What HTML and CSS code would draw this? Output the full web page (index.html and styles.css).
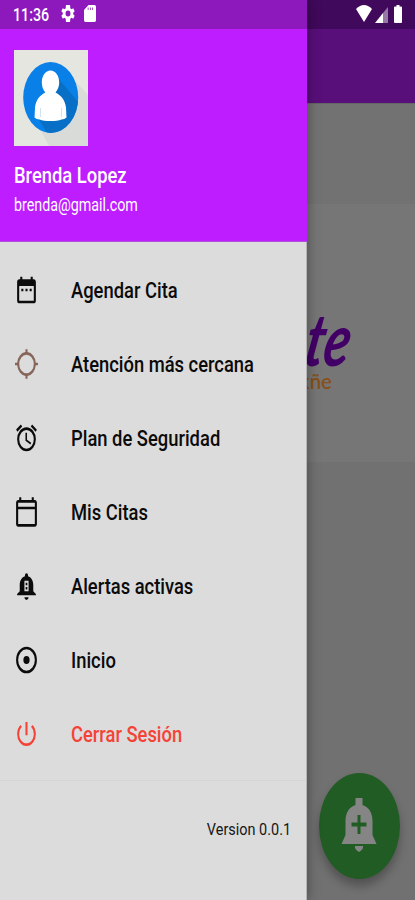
FILE: index.html
```html
<!DOCTYPE html>
<html lang="es">
<head>
<meta charset="utf-8">
<title>Menú</title>
<link rel="stylesheet" href="styles.css">
</head>
<body>
<div class="phone">
  <aside class="drawer">
    <header class="profile">
      <div class="status"><span class="clock"><span class="t">11:36</span></span>
        <svg class="gear" viewBox="2 2 20 20" preserveAspectRatio="none"><path fill-rule="evenodd" d="M19.4 13a7.500 7.500 0 0 0 0-2l2.100-1.600-2-3.500-2.500 1a7.300 7.300 0 0 0-1.700-1L14.900 2H9.100l-.4 3.900a7.300 7.300 0 0 0-1.700 1l-2.500-1-2 3.500L4.600 11a7.500 7.500 0 0 0 0 2l-2.100 1.600 2 3.500 2.500-1a7.300 7.300 0 0 0 1.700 1l.4 3.900h5.800l.4-3.900a7.300 7.300 0 0 0 1.700-1l2.500 1 2-3.500zM12 15.500a3.500 3.500 0 1 1 0-7 3.500 3.500 0 0 1 0 7z"/></svg>
        <svg class="sd" viewBox="4 2 16 20" preserveAspectRatio="none"><path fill-rule="evenodd" d="M18 2h-8L4 8v12q0 2 2 2h12q2 0 2-2V4q0-2-2-2zM9 5h1v3H9zm3 0h1v3h-1zm3 0h1v3h-1z"/></svg>
      </div>
      <svg class="avatar" viewBox="0 0 74 96">
        <defs><clipPath id="disc"><ellipse cx="36.700" cy="47.500" rx="27.500" ry="35.500"/></clipPath></defs>
        <path fill="#e6e6e1" d="M0 0h74v96H0z"/>
        <path fill="#d9dbd9" d="M62 32l12 13v51H35L26 79z"/>
        <ellipse cx="36.700" cy="47.500" rx="27.500" ry="35.500" fill="#0880e8"/>
        <g clip-path="url(#disc)"><path fill="#086fc6" d="M44 28l27 32-12 28H36L24 68z"/>
        <path fill="#fff" d="M36.500 20.500c-5 0-8.700 5-8.700 12 0 4.500 1.500 7.500 3.500 10-6 3-9.500 8-10.300 15l-.5 10q2 2 5 2 4 1.500 11 1.500t11-1.500q3 0 5-2l-.5-10c-.8-7-4.500-12-10.500-15 2-2.500 3.700-5.500 3.700-10 0-7-3.700-12-8.700-12z"/>
        <path stroke="#b9d5ec" stroke-width=".7" d="M26.500 58v9M47.500 58v9"/></g>
      </svg>
      <div class="name"><span class="t">Brenda Lopez</span></div>
      <div class="mail"><span class="t">brenda@gmail.com</span></div>
    </header>
    <nav class="menu">
      <div class="item"><svg class="icon" viewBox="0 0 24 24" preserveAspectRatio="none"><path d="M9 11H7v2h2v-2zm4 0h-2v2h2v-2zm4 0h-2v2h2v-2zm2-7h-1V2h-2v2H8V2H6v2H5c-1.110 0-2 .9-2 2v14c0 1.100.89 2 2 2h14c1.100 0 2-.9 2-2V6c0-1.100-.9-2-2-2zm0 16H5V9h14v11z"/></svg><span class="label">Agendar Cita</span></div>
      <div class="item"><svg class="icon brown" viewBox="0 0 24 24" preserveAspectRatio="none"><path d="M20.940 11A8.994 8.994 0 0 0 13 3.060V1h-2v2.060A8.994 8.994 0 0 0 3.060 11H1v2h2.060A8.994 8.994 0 0 0 11 20.940V23h2v-2.060A8.994 8.994 0 0 0 20.940 13H23v-2h-2.060zM12 19a7 7 0 1 1 0-14 7 7 0 0 1 0 14z"/></svg><span class="label">Atención más cercana</span></div>
      <div class="item"><svg class="icon" viewBox="0 0 24 24" preserveAspectRatio="none"><path d="M22 5.720l-4.600-3.860-1.290 1.530 4.600 3.860L22 5.720zM7.880 3.390L6.600 1.860 2 5.710l1.290 1.530 4.590-3.850zM12.500 8H11v6l4.750 2.850.75-1.230-4-2.370V8zM12 4a9 9 0 1 0 0 18 9 9 0 0 0 0-18zm0 16a7 7 0 1 1 0-14 7 7 0 0 1 0 14z"/></svg><span class="label">Plan de Seguridad</span></div>
      <div class="item"><svg class="icon" viewBox="0 0 24 24" preserveAspectRatio="none"><path d="M20 3h-1V1h-2v2H7V1H5v2H4c-1.100 0-2 .9-2 2v16c0 1.100.9 2 2 2h16c1.100 0 2-.9 2-2V5c0-1.100-.9-2-2-2zm0 18H4V10h16v11zm0-13H4V5h16v3z"/></svg><span class="label">Mis Citas</span></div>
      <div class="item"><svg class="icon" viewBox="0 0 24 24" preserveAspectRatio="none"><path fill-rule="evenodd" d="M18.500 16v-5c0-3.070-2.140-5.640-5-6.320V4a1.500 1.500 0 0 0-3 0v.68C7.630 5.360 5.500 7.920 5.500 11v5l-2.500 2v1h18v-1l-2.500-2zM10 20.500h4a2 2 0 0 1-4 0zM10 8h4v8h-4zm1.200 1.500v1.900h1.600V9.500zm0 3.300v1.900h1.600v-1.900z"/></svg><span class="label">Alertas activas</span></div>
      <div class="item"><svg class="icon" viewBox="0 0 24 24" preserveAspectRatio="none"><path d="M12 2a10 10 0 1 0 0 20 10 10 0 0 0 0-20zm0 18a8 8 0 1 1 0-16 8 8 0 0 1 0 16zm3-8a3 3 0 1 1-6 0 3 3 0 0 1 6 0z"/></svg><span class="label">Inicio</span></div>
      <div class="item exit"><svg class="icon" viewBox="0 0 24 24" preserveAspectRatio="none"><path d="M13 3h-2v10h2V3zm4.830 2.170l-1.420 1.420A6.920 6.920 0 0 1 19 12a7 7 0 1 1-11.420-5.420L6.170 5.170A8.932 8.932 0 0 0 3 12a9 9 0 0 0 18 0c0-2.740-1.230-5.180-3.170-6.830z"/></svg><span class="label">Cerrar Sesión</span></div>
    </nav>
    <footer class="version"><span class="t">Version 0.0.1</span></footer>
  </aside>
  <main class="page">
    <div class="status dark">
      <svg class="wifi" viewBox="0 0 16 17"><path d="M0 4Q8-4 16 4L8 17z"/></svg>
      <svg class="signal" viewBox="0 0 13 16"><path d="M0 16L8 6v10z"/><path opacity=".45" d="M8 6l5-6v16H8z"/></svg>
      <svg class="battery" viewBox="0 0 8 18"><path d="M2.500 0h3v1.500H7q1 0 1 1V17q0 1-1 1H1q-1 0-1-1V2.500q0-1 1-1h1.500z"/></svg>
    </div>
    <div class="appbar"></div>
    <div class="band"></div>
    <div class="hero"><div class="script"><span class="t">te</span></div><div class="sub"><span class="t">kñe</span></div></div>
    <div class="rest">
      <div class="fab"><svg viewBox="0 0 36 56"><path fill-rule="evenodd" d="M14.500 0h7v7C28 9 31.500 15 31.500 23v14l4 9H.5l4-9V23c0-8 3.500-14 10-16zM16.500 17v7.500h-6v4h6V36h3v-7.500h6v-4h-6V17z"/><path d="M14 48h8q1 3-4 6-5-3-4-6z"/></svg></div>
    </div>
  </main>
</div>
</body>
</html>
```
FILE: styles.css
```css
* { box-sizing: border-box; }
body { margin: 0; font-family: Roboto, "Liberation Sans", sans-serif; }
svg { display: block; flex: none; fill: currentColor; }
.phone { width: 415px; height: 900px; display: flex; overflow: hidden; background: #727272; }
.t, .label { display: inline-block; white-space: nowrap; transform-origin: 0 50%; }

.drawer { width: 307.400px; height: 900px; flex: none; position: relative; z-index: 2; background: #dcdcdc; box-shadow: 0 0 12px rgba(0,0,0,.38); border-right: 1px solid #b5b5b5; }
.profile { height: 242px; margin-right: -1px; background: #be1dff; color: #fff; border-bottom: 1px solid #b04fd8; }
.status { height: 29px; display: flex; align-items: center; background: #8d19bd; color: #fff; }
.clock { width: 48px; height: 29px; line-height: 29px; margin-left: 13px; font-size: 18px; font-weight: 500; }
.clock .t { transform: scaleX(.79); }
.gear { width: 14px; height: 17px; margin-top: -2px; }
.sd { width: 12px; height: 17px; margin: -2px 0 0 9px; }
.avatar { width: 74px; height: 96px; margin: 21px 0 0 14px; }
.name { margin: 17px 0 0 14px; height: 26px; line-height: 26px; font-size: 22px; font-weight: 500; }
.name .t { transform: scaleX(.835); }
.mail { margin: 5px 0 0 14px; height: 22px; line-height: 22px; font-size: 17.500px; }
.mail .t { transform: scaleX(.815); }

.menu { height: 539px; padding-top: 11px; border-bottom: 1px solid #d5d5d5; }
.item { height: 74px; display: flex; align-items: center; padding-left: 14px; color: #0b0b0b; }
.icon { width: 25px; height: 32px; margin-right: 32px; }
.brown { color: #86655a; }
.label { font-size: 22px; font-weight: 500; line-height: 30px; margin-top: 2px; transform: scaleX(.835); }
.exit { color: #f44336; }
.version { display: flex; justify-content: flex-end; padding: 36px 15px 0 0; font-size: 17px; line-height: 24px; color: #161616; }
.version .t { transform: scaleX(.85); transform-origin: 100% 50%; }

.page { flex: 1; min-width: 0; display: flex; flex-direction: column; }
.dark { background: #40095b; padding-left: 48.600px; }
.wifi { width: 16px; height: 17px; margin-top: -3px; }
.signal { width: 13px; height: 16px; margin: 0 0 0 3px; }
.battery { width: 8px; height: 18px; margin: -2px 0 0 6px; }
.appbar { height: 74px; background: #580f79; }
.band { height: 101px; background: #727272; border-top: 1px solid #646464; }
.hero { height: 258px; background: #767676; padding-top: 102px; }
.script { height: 64px; line-height: 64px; color: #420067; font-family: Lato, sans-serif; font-size: 73px; font-style: italic; font-weight: 700; }
.script .t { transform: scaleX(.73) skewX(-14deg); }
.sub { height: 24px; line-height: 24px; margin: -1px 0 0 -8px; color: #885018; font-family: Lato, sans-serif; font-size: 21px; font-weight: 600; }
.sub .t { transform: scaleX(.97); }
.rest { flex: 1; background: #717171; padding: 311px 0 0 11.600px; }
.fab { width: 81px; height: 106px; border-radius: 50%; display: flex; align-items: center; justify-content: center; background: #205c23; color: #858585; box-shadow: 0 7px 10px rgba(0,0,0,.28); }
.fab svg { width: 36px; height: 56px; }
```
